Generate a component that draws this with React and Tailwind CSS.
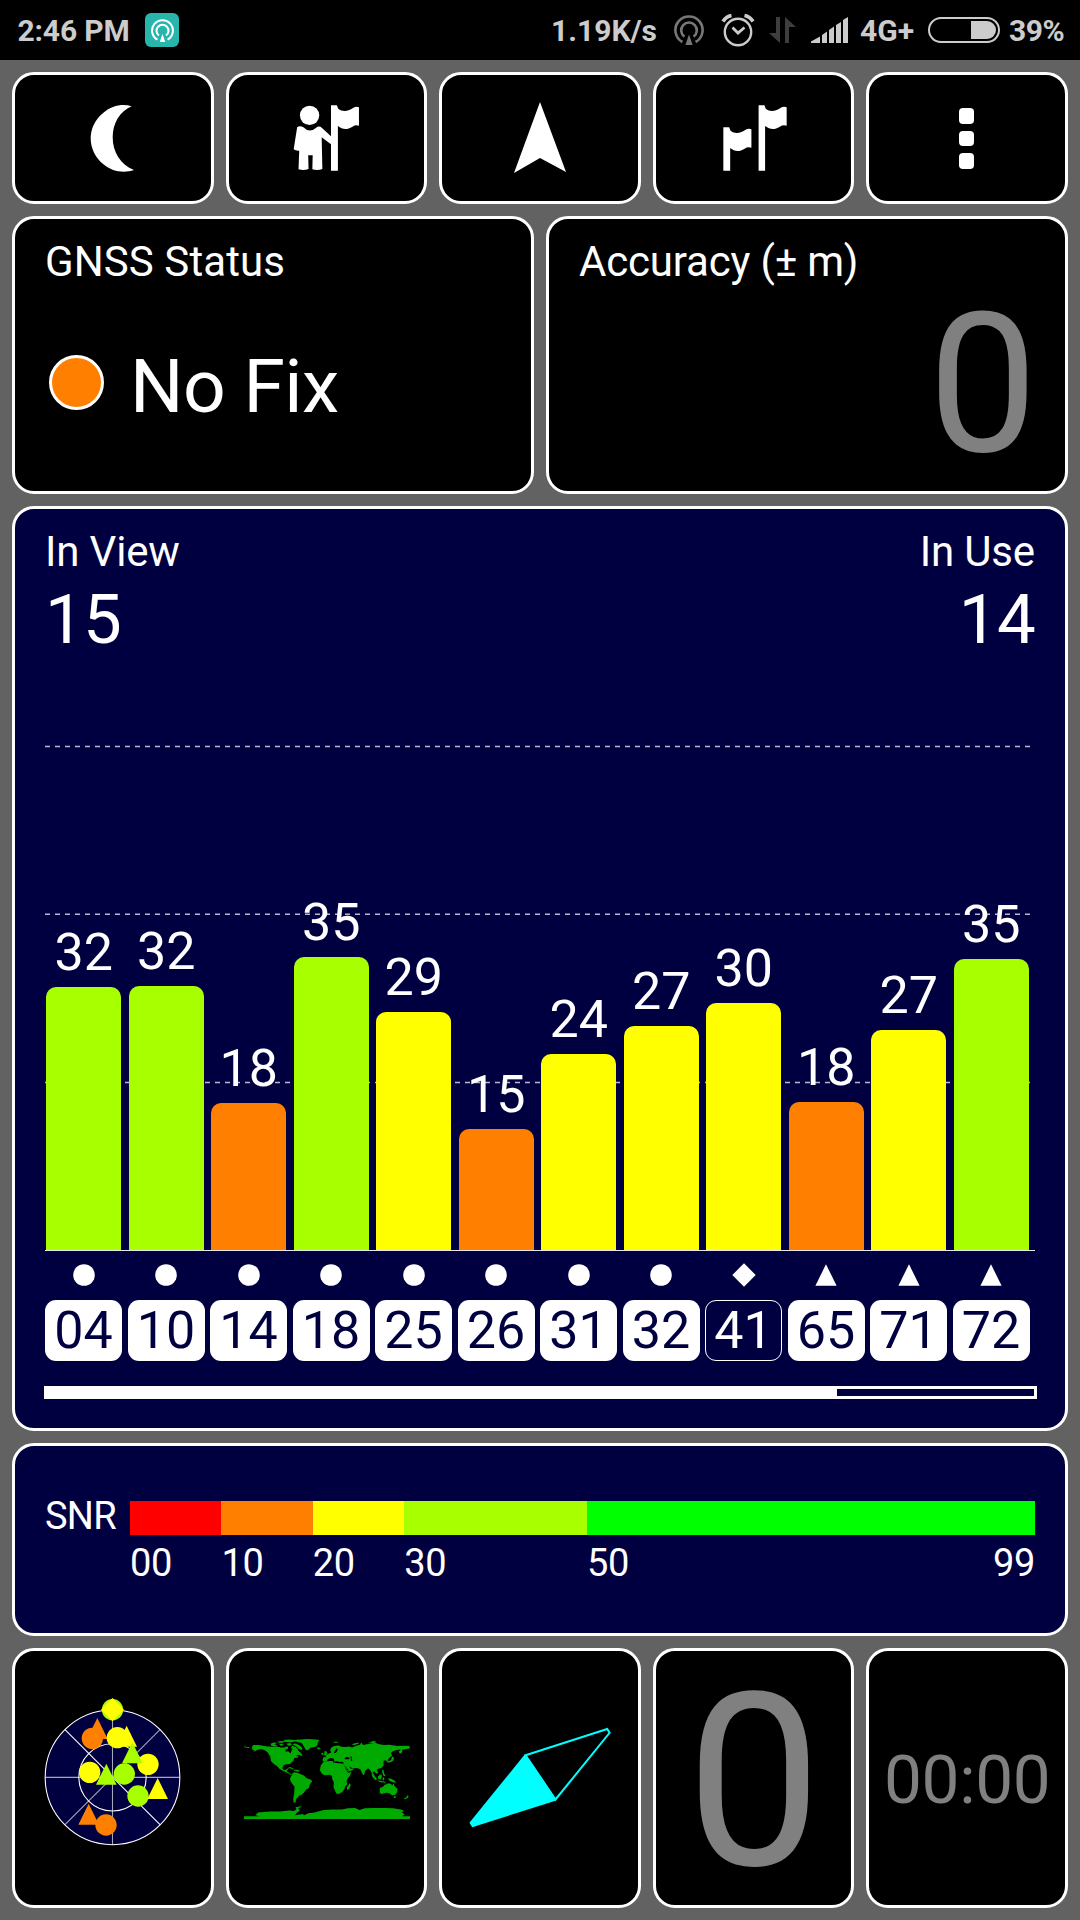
import React from "react";

const CARD = "border-[3px] border-white rounded-[22px] bg-black";

const LIME = "#a8ff00";
const YELLOW = "#ffff00";
const ORANGE = "#ff8000";

// Height of each bar is in pixels above the chart's base line.
const SATELLITES = [
  { id: "04", snr: 32, height: 263, color: LIME, mark: "circle" },
  { id: "10", snr: 32, height: 264, color: LIME, mark: "circle" },
  { id: "14", snr: 18, height: 147, color: ORANGE, mark: "circle" },
  { id: "18", snr: 35, height: 293, color: LIME, mark: "circle" },
  { id: "25", snr: 29, height: 238, color: YELLOW, mark: "circle" },
  { id: "26", snr: 15, height: 121, color: ORANGE, mark: "circle" },
  { id: "31", snr: 24, height: 196, color: YELLOW, mark: "circle" },
  { id: "32", snr: 27, height: 224, color: YELLOW, mark: "circle" },
  { id: "41", snr: 30, height: 247, color: YELLOW, mark: "diamond", unused: true },
  { id: "65", snr: 18, height: 148, color: ORANGE, mark: "triangle" },
  { id: "71", snr: 27, height: 220, color: YELLOW, mark: "triangle" },
  { id: "72", snr: 35, height: 291, color: LIME, mark: "triangle" },
];

function HotspotIcon({ className }) {
  return (
    <svg viewBox="0 0 30 30" className={className} fill="none" stroke="currentColor" strokeWidth="2.6">
      <path d="M8.4 27 A13.6 13.6 0 1 1 21.6 27" />
      <path d="M10.4 21.6 A7.8 7.8 0 1 1 19.6 21.6" />
      <path d="M15 19.5 L18.6 30 H11.4 Z" fill="currentColor" stroke="none" />
    </svg>
  );
}

function StatusBar() {
  return (
    <header className="h-[60px] bg-black flex items-center text-[#cccccc] text-[30px] leading-none font-bold pl-[17.5px] pr-[17px]">
      <span className="w-[127.5px] tracking-[-0.15px] mt-[1px]">2:46 PM</span>
      <span className="w-[34px] h-[34px] rounded-[6px] bg-[#27b5ac] text-white flex items-center justify-center">
        <HotspotIcon className="w-[23px] h-[23px]" />
      </span>
      <span className="ml-auto mt-[1px]">1.19K/s</span>
      <HotspotIcon className="w-[30px] h-[30px] ml-[17px] text-[#777777]" />
      <svg viewBox="0 0 34 34" className="w-[34px] h-[34px] ml-[17px]" fill="none" stroke="currentColor">
        <circle cx="17" cy="19" r="13.2" strokeWidth="2.4" />
        <path d="M11.5 14.5 L17 20 L23.5 14.5" strokeWidth="2.8" />
        <path d="M2 8.5 Q5 3.5 10.5 2.5 M32 8.5 Q29 3.5 23.5 2.5" strokeWidth="3.6" />
      </svg>
      <svg viewBox="0 0 27 26" className="w-[27px] h-[26px] ml-[14px]" fill="#3e3e3e">
        <path d="M7 0 H11 V26 L0 16 H7 Z M16 0 L27 10 H20 V26 H16 Z" />
      </svg>
      <svg viewBox="0 0 37 26" className="w-[37px] h-[26px] ml-[15px]" fill="currentColor">
        <path d="M0 26 V24.5 L9 19.5 V26 Z M11 26 V18 L16 14.5 V26 Z M18 26 V13 L23 9.5 V26 Z M25 26 V8 L30 5 V26 Z M32 26 V3 L37 0 V26 Z" />
      </svg>
      <span className="ml-[12px] w-[54px] mt-[1px]">4G+</span>
      <span className="ml-[14px] w-[72px] h-[26px] rounded-full border-2 border-[#cccccc] flex justify-end p-[2px]">
        <span className="w-[25px] rounded-r-full bg-[#cccccc]" />
      </span>
      <span className="ml-[9px] w-[54px] tracking-[-0.4px] mt-[1px]">39%</span>
    </header>
  );
}

function Toolbar() {
  const button = CARD + " flex items-center justify-center";
  return (
    <nav className="h-[132px] grid grid-cols-5 gap-[12px]">
      <button className={button}>
        <svg viewBox="260 315 128 200" preserveAspectRatio="none" className="w-[44px] h-[67px] mr-[2px]" fill="white">
          <path d="M381 319 C355 310 323 317 299 338 C273 360 262 388 262 415 C262 443 275 472 299 492 C325 515 360 519 388 509 C349 493 326 456 326 411 C326 369 347 334 381 319 Z" />
        </svg>
      </button>
      <button className={button}>
        <svg viewBox="850 315 194 198" preserveAspectRatio="none" className="w-[67px] h-[66px]" fill="white">
          <ellipse cx="898" cy="346" rx="28" ry="29" />
          <path d="M862 382 Q869 376 880 382 Q898 401 917 383 Q926 376 934 384 L960 409 V433 L933 412 L935 507 Q922 513 906 508 L907 466 H894 L895 507 Q881 513 866 508 L868 452 Q858 453 852 448 Z" />
          <path d="M960 316 H977 L981 326 C995 338 1013 332 1025 323 Q1034 318 1041 322 V377 Q1032 373 1022 380 C1005 391 993 388 980 378 V512 H960 Z" />
        </svg>
      </button>
      <button className={button}>
        <svg viewBox="0 0 52 72" className="w-[52px] h-[72px]" fill="white">
          <path d="M26 0 L52 70 L26 56 L0 71 Z" />
        </svg>
      </button>
      <button className={button}>
        <svg viewBox="530 315 187 198" preserveAspectRatio="none" className="w-[64px] h-[66px] ml-[2px]" fill="white">
          <path d="M634 316 H651 L655 326 C669 338 687 332 699 323 Q708 318 716 322 V377 Q706 373 696 380 C679 391 667 388 653 378 V512 H634 Z" />
          <path d="M531 382 H548 L552 392 C566 404 584 398 596 389 Q605 384 613 388 V443 Q603 439 593 446 C576 457 564 454 551 444 V512 H531 Z" />
        </svg>
      </button>
      <button className={button + " flex-col gap-[7px]"}>
        <span className="w-[15px] h-[16px] rounded-[4px] bg-white mr-[1px]" />
        <span className="w-[15px] h-[15px] rounded-[4px] bg-white mr-[1px]" />
        <span className="w-[15px] h-[16px] rounded-[4px] bg-white mr-[1px]" />
      </button>
    </nav>
  );
}

function StatusCards() {
  return (
    <section className="h-[277.6px] grid grid-cols-2 gap-[12px]">
      <div className={CARD + " pl-[30px] pt-[21.6px]"}>
        <h2 className="text-[42px] leading-none tracking-[0.1px]">GNSS Status</h2>
        <div className="flex items-center mt-[66px] pl-[3.5px]">
          <span className="w-[55px] h-[55px] rounded-full border-[3px] border-white bg-[#ff8000] mt-[-8px]" />
          <span className="text-[75px] leading-none ml-[26.5px] tracking-[-0.5px]">No Fix</span>
        </div>
      </div>
      <div className={CARD + " px-[30px] pt-[21.6px]"}>
        <h2 className="text-[42px] leading-none tracking-[-0.18px]">Accuracy (± m)</h2>
        <p className="text-[194.5px] leading-none text-[#808080] text-right mt-[5px] mr-[-2.5px]">0</p>
      </div>
    </section>
  );
}

function Mark({ kind }) {
  return (
    <svg viewBox="-12 -12 24 24" className="w-[24px] h-[24px]" fill="white">
      {kind === "circle" && <circle r="10.8" />}
      {kind === "diamond" && <path d="M0 -11.7 L11.7 0 L0 11.7 L-11.7 0 Z" />}
      {kind === "triangle" && <path d="M0 -10.8 L10.6 10.8 H-10.6 Z" />}
    </svg>
  );
}

function SatelliteCard() {
  return (
    <section className="h-[925.6px] border-[3px] border-white rounded-[22px] bg-[#000040] px-[30px] flex flex-col">
      <div className="flex justify-between pt-[22.3px]">
        <div>
          <h2 className="text-[42px] leading-none tracking-[-0.15px]">In View</h2>
          <p className="text-[69px] leading-none mt-[12.4px] tracking-[-0.7px]">15</p>
        </div>
        <div className="text-right">
          <h2 className="text-[42px] leading-none tracking-[-0.15px]">In Use</h2>
          <p className="text-[69px] leading-none mt-[12.4px] tracking-[-0.7px]">14</p>
        </div>
      </div>

      <div className="relative h-[597px] shrink-0 flex items-end border-b border-[#e6e6ee]">
        <svg
          viewBox="0 0 990 596"
          className="absolute left-0 top-0 w-[990px] h-[596px]"
          stroke="#b9b9cb"
          strokeWidth="1.5"
          strokeDasharray="5 5"
        >
          <line x1="0" x2="985" y1="92.4" y2="92.4" />
          <line x1="0" x2="985" y1="260.2" y2="260.2" />
          <line x1="0" x2="985" y1="428.4" y2="428.4" />
        </svg>
        {SATELLITES.map((s) => (
          <div key={s.id} className="relative w-[82.5px] pl-px flex flex-col">
            <span className="w-[75.3px] text-center text-[52px] leading-none mb-[8px]">{s.snr}</span>
            <span
              className="w-[75.3px] rounded-t-[10px]"
              style={{ height: s.height, backgroundColor: s.color }}
            />
          </div>
        ))}
      </div>

      <div className="flex mt-[12px]">
        {SATELLITES.map((s) => (
          <div key={s.id} className="w-[82.5px] shrink-0">
            <div className="w-[77px] flex flex-col items-center">
              <Mark kind={s.mark} />
              <span
                className={
                  s.unused
                    ? "mt-[13px] w-full h-[61px] rounded-[11px] border-[1.4px] border-white text-[52px] leading-[59px] text-center"
                    : "mt-[13px] w-full h-[61px] rounded-[11px] bg-white text-[#000040] text-[52px] leading-[61px] text-center"
                }
              >
                {s.id}
              </span>
            </div>
          </div>
        ))}
      </div>

      <div className="mt-[25px] mx-[-1px] w-[993px] h-[13px] border-[3px] border-white shrink-0">
        <div className="h-full w-[790px] bg-white" />
      </div>
    </section>
  );
}

const SNR_SCALE = [
  { label: "00", span: 10, color: "#ff0000" },
  { label: "10", span: 10, color: ORANGE },
  { label: "20", span: 10, color: YELLOW },
  { label: "30", span: 20, color: LIME },
  { label: "50", span: 49, color: "#00ff00" },
];

function SnrCard() {
  return (
    <section className="h-[192.4px] border-[3px] border-white rounded-[22px] bg-[#000040] px-[30px] pt-[50px] flex text-[38px] leading-none">
      <span className="w-[85px] tracking-[-0.7px] mt-[1px]">SNR</span>
      <div className="flex-1 pt-[4.6px]">
        <div className="relative flex">
          {SNR_SCALE.map((s) => (
            <div key={s.label} style={{ width: (s.span / 99) * 100 + "%" }}>
              <div className="h-[34px]" style={{ backgroundColor: s.color }} />
              <div className="mt-[9px] tracking-[-0.3px]">{s.label}</div>
            </div>
          ))}
          <span className="absolute right-0 top-[43px] tracking-[-0.3px]">99</span>
        </div>
      </div>
    </section>
  );
}

function Radar() {
  const dot = (x, y, fill) => <circle cx={x} cy={y} r="32" fill={fill} />;
  const tri = (x, y, fill) => <path d={`M${x} ${y} L${x + 31} ${y + 63} H${x - 31} Z`} fill={fill} />;
  return (
    <svg viewBox="43 55 411 443" className="w-[137px] h-[147.7px] mt-[-11px]">
      <circle cx="248.500" cy="293" r="202" fill="#000040" />
      <g stroke="#c4c4d2" strokeWidth="3.200" fill="none">
        <path d="M248.500 91 V495 M46.500 293 H450.500 M106 435 L391 150" opacity="0.85" />
        <path d="M106 150 L391 435" stroke="#ffffff" />
        <circle cx="248.500" cy="293" r="202" stroke="#ffffff" />
        <circle cx="248.500" cy="293" r="101" stroke="#ffffff" />
      </g>
      {dot(248.500, 90, LIME)}
      <path d="M248.500 55 L283 90 L248.500 125 L214 90 Z" fill={YELLOW} />
      {tri(203, 115, ORANGE)}
      {dot(188, 176, ORANGE)}
      {tri(291, 138, YELLOW)}
      {dot(263, 174, YELLOW)}
      {dot(355, 254, YELLOW)}
      {tri(308, 188, LIME)}
      {dot(180, 278, YELLOW)}
      {dot(284, 283, LIME)}
      {tri(230, 252, LIME)}
      {dot(325, 349, LIME)}
      {tri(384, 295, YELLOW)}
      {tri(177, 372, ORANGE)}
      {dot(229, 436, ORANGE)}
    </svg>
  );
}

function WorldMap() {
  return (
    <svg viewBox="39 57 499 240" className="w-[166px] h-[80px] mt-[3px] ml-[1px]" fill="#00aa00">
      {/* North and Central America */}
      <path d="M63 81 L67 75 L83 75 L96 77 L110 79 L126 80 L139 79 L150 82 L160 82 L166 79 L172 80 L171 86 L163 89 L164 94 L173 94 L179 100 L182 91 L185 87 L180 83 L184 77 L194 81 L200 86 L202 91 L209 98 L208 103 L200 105 L195 108 L203 109 L200 113 L190 114 L187 123 L180 129 L177 132 L166 133 L158 135 L154 144 L157 149 L162 151 L168 146 L171 149 L167 154 L173 157 L175 160 L184 163 L179 165 L171 159 L157 153 L146 147 L138 138 L129 132 L120 123 L118 109 L109 96 L100 90 L90 87 L80 89 L70 95 L65 97 L72 92 L64 89 Z" />
      <path d="M119 71 L128 67 L138 68 L131 73 L141 76 L131 79 L121 77 Z M139 65 L152 63 L164 64 L154 68 L144 68 Z M144 72 L154 72 L160 75 L149 77 Z M157 60 L175 58 L190 60 L204 58 L205 62 L191 64 L180 67 L163 65 Z M166 71 L178 69 L183 74 L174 78 Z M184 72 L194 70 L207 76 L214 84 L213 90 L204 87 L197 80 Z" />
      <path d="M202 101 L209 97 L215 105 L211 108 Z M167 147 L176 141 L183 143 L190 148 L184 147 L177 145 Z M188 149 L199 149 L207 152 L203 155 L191 152 Z M40 79 H46 V82 H40 Z M46 81 H55 V84 H48 Z" />
      {/* Greenland and Iceland */}
      <path d="M193 61 L209 58 L230 57 L253 58 L266 60 L261 66 L260 74 L256 79 L239 83 L230 91 L224 88 L218 77 L212 69 L197 65 Z M256 83 L265 82 L270 85 L263 88 Z" />
      {/* South America */}
      <path d="M184 161 L189 157 L199 158 L209 162 L220 167 L226 174 L242 180 L243 185 L237 193 L234 204 L225 209 L219 218 L211 225 L204 227 L201 233 L197 235 L193 249 L188 247 L187 237 L190 218 L191 200 L183 190 L177 179 L179 171 L184 165 Z" />
      {/* Africa */}
      <path d="M277 127 L285 124 L299 123 L310 124 L313 129 L325 130 L338 131 L341 139 L347 151 L352 158 L362 156 L357 168 L349 178 L347 185 L350 193 L343 199 L341 207 L334 216 L326 221 L317 221 L313 213 L308 201 L309 187 L304 177 L304 168 L297 164 L281 166 L273 161 L267 150 L270 136 Z M356 190 L360 194 L355 207 L349 210 L348 202 L353 196 Z" />
      {/* Europe and Asia */}
      <path d="M275 123 L277 112 L287 111 L283 106 L293 101 L301 97 L298 90 L303 81 L314 77 L324 76 L332 80 L344 81 L354 79 L364 82 L377 77 L388 74 L391 67 L397 75 L412 72 L433 68 L444 72 L457 75 L476 74 L500 78 L522 77 L537 78 L537 85 L527 87 L515 89 L514 97 L508 101 L504 95 L511 88 L497 90 L486 94 L480 98 L484 107 L475 114 L471 120 L472 126 L464 121 L459 122 L458 130 L459 136 L453 143 L441 147 L438 151 L443 158 L437 161 L430 154 L426 158 L432 167 L428 168 L422 157 L417 149 L412 145 L403 153 L401 162 L398 166 L393 158 L389 148 L380 145 L371 144 L365 151 L352 155 L345 145 L338 133 L337 125 L325 126 L318 123 L311 126 L309 116 L300 114 L291 117 L288 124 L281 125 Z" />
      <path d="M280 94 L286 93 L290 101 L285 105 L279 105 L281 100 Z M272 99 L278 98 L277 104 L272 104 Z M306 65 H321 V68 H312 Z M363 74 L369 70 L384 67 L384 70 L371 75 Z M412 68 L428 63 L438 65 L430 69 Z M484 109 L490 112 L488 122 L481 126 L470 128 L470 124 L481 121 Z" />
      {/* South-east Asia and Oceania */}
      <path d="M422 160 L431 167 L439 177 L435 181 L425 171 Z M437 181 L452 183 L464 185 L464 188 L448 186 Z M442 169 L451 163 L454 169 L450 178 L442 176 Z M454 149 L459 151 L460 160 L465 168 L459 169 L455 159 Z M456 172 L461 173 L460 181 L456 181 Z M472 175 L482 176 L492 182 L497 188 L486 187 L476 182 Z" />
      <path d="M447 204 L456 201 L462 194 L469 192 L473 190 L482 192 L484 197 L489 190 L492 199 L500 206 L500 216 L493 225 L484 226 L476 220 L466 218 L453 222 L447 219 Z M489 229 H495 V234 H490 Z M530 226 L534 228 L532 233 L523 238 L519 236 L527 232 Z" />
      {/* Antarctica */}
      <path d="M39 297 V289 H86 L73 286 L81 278 L117 275 L148 275 L174 272 L190 273 L197 267 L193 263 L211 258 L208 263 L202 264 L207 272 L197 279 L193 286 L216 282 L220 286 L232 280 L251 278 L278 270 L305 269 L333 269 L351 265 L373 264 L386 270 L402 265 L430 264 L464 264 L487 265 L511 269 L521 273 L513 277 L522 283 L514 289 H538 V297 Z" />
      {/* Inland waters */}
      <path d="M341 114 L348 110 L357 114 L354 118 L343 118 Z M359 109 L364 110 L362 115 L365 122 L361 123 Z M303 119 L307 119 L313 128 L309 128 Z M343 136 L347 142 L354 153 L350 151 Z M354 139 L364 144 L368 146 L360 146 Z M312 93 L318 84 L321 90 L315 99 L309 99 Z" fill="black" />
    </svg>
  );
}

function BottomRow() {
  const tile = CARD + " flex items-center justify-center";
  return (
    <footer className="h-[260.4px] grid grid-cols-5 gap-[12px] text-[#808080]">
      <div className={tile}>
        <Radar />
      </div>
      <div className={tile}>
        <WorldMap />
      </div>
      <div className={tile}>
        <svg viewBox="469 1727 142 101" className="w-[142px] h-[101px]">
          <path d="M524.900 1754.300 L555.500 1800.700 L472.200 1827.200 L469.400 1822.700 Z" fill="#00ffff" />
          <path
            d="M525.600 1755.200 L607.200 1729 L609.600 1732.800 L555.500 1799.500 Z"
            fill="none"
            stroke="#00ffff"
            strokeWidth="2"
          />
        </svg>
      </div>
      <div className={tile}>
        <span className="text-[241px] leading-none mt-[9px] ml-[1px]">0</span>
      </div>
      <div className={tile}>
        <span className="text-[67.500px] leading-none mt-[4px] tracking-[-0.3px]">00:00</span>
      </div>
    </footer>
  );
}

export default function App() {
  return (
    <div className="w-[1080px] h-[1920px] overflow-hidden bg-[#626262] text-white font-['Roboto',sans-serif]">
      <StatusBar />
      <main className="p-[12px] flex flex-col gap-[12px]">
        <Toolbar />
        <StatusCards />
        <SatelliteCard />
        <SnrCard />
        <BottomRow />
      </main>
    </div>
  );
}
